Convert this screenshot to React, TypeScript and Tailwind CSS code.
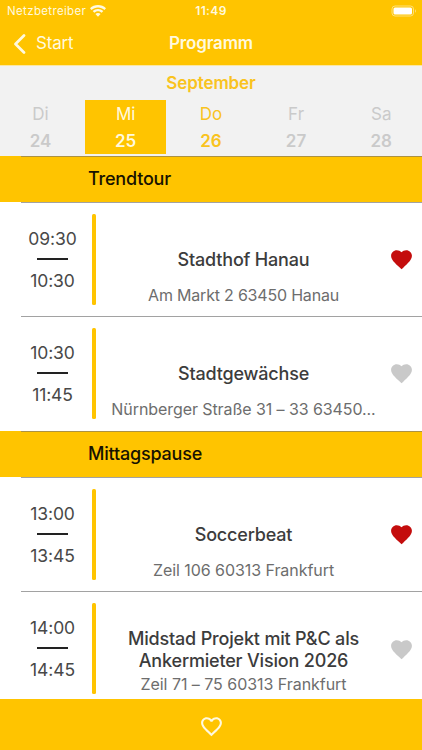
import React from "react";

type Session = {
  start: string;
  end: string;
  title: string[];
  place: string;
  placeTracking: string;
  favorite: boolean;
  height: string;
};

const HEART =
  "M12 21.35l-1.45-1.32C5.4 15.36 2 12.28 2 8.5 2 5.42 4.42 3 7.5 3c1.74 0 3.41.81 4.5 2.09C13.09 3.81 14.76 3 16.5 3 19.58 3 22 5.42 22 8.5c0 3.78-3.4 6.86-8.55 11.54L12 21.35z";
const HEART_OUTLINE =
  "M16.5 3c-1.74 0-3.41.81-4.5 2.09C10.91 3.81 9.24 3 7.5 3 4.42 3 2 5.42 2 8.5c0 3.78 3.4 6.86 8.55 11.54L12 21.35l1.45-1.32C18.6 15.36 22 12.28 22 8.5 22 5.42 19.58 3 16.5 3zm-4.4 15.55l-.1.1-.1-.1C7.14 14.24 4 11.39 4 8.5 4 6.5 5.5 5 7.5 5c1.54 0 3.04.99 3.57 2.36h1.87C13.46 5.99 14.96 5 16.5 5c2 0 3.5 1.5 3.5 3.5 0 2.89-3.14 5.74-7.9 10.05z";

const days = [
  { name: "Di", date: "24", style: "text-[#cacaca]" },
  { name: "Mi", date: "25", style: "bg-[#ffc400] text-[#fff9df]" },
  { name: "Do", date: "26", style: "text-[#f9c320]" },
  { name: "Fr", date: "27", style: "text-[#cacaca]" },
  { name: "Sa", date: "28", style: "text-[#cacaca]" },
];

const morning: Session[] = [
  { start: "09:30", end: "10:30", title: ["Stadthof Hanau"], place: "Am Markt 2 63450 Hanau", placeTracking: "tracking-[-0.2px]", favorite: true, height: "h-[114px]" },
  { start: "10:30", end: "11:45", title: ["Stadtgewächse"], place: "Nürnberger Straße 31 – 33 63450...", placeTracking: "tracking-[-0.08px]", favorite: false, height: "h-[115px]" },
];
const afternoon: Session[] = [
  { start: "13:00", end: "13:45", title: ["Soccerbeat"], place: "Zeil 106 60313 Frankfurt", placeTracking: "tracking-[-0.06px]", favorite: true, height: "h-[114px]" },
  { start: "14:00", end: "14:45", title: ["Midstad Projekt mit P&C als", "Ankermieter Vision 2026"], place: "Zeil 71 – 75 60313 Frankfurt", placeTracking: "tracking-[-0.04px]", favorite: false, height: "h-[114px]" },
];

function SectionHeader({ title }: { title: string }) {
  return (
    <div className="h-[46px] shrink-0 bg-[#ffc400]">
      <div className="ml-[21px] flex h-[46px] items-center border-t border-[#ac9243] pl-[67px] pb-[2px] text-[18px] font-medium tracking-[-0.2px] text-[#171200]">
        {title}
      </div>
    </div>
  );
}

function SessionRow({ s }: { s: Session }) {
  const twoLines = s.title.length > 1;
  return (
    <div className={`ml-[21px] flex shrink-0 border-t border-[#a2a2a2] ${s.height}`}>
      <div className="flex w-[63px] flex-col items-center pt-[25px] text-[17.5px] leading-[22px] tracking-[-0.1px] text-[#484848]">
        <span>{s.start}</span>
        <span className="mt-[8px] mb-[10px] h-[2px] w-[31px] bg-[#222]" />
        <span>{s.end}</span>
      </div>
      <div className="mt-[11px] ml-[8px] h-[91px] w-[4px] rounded-[1.5px] bg-[#ffc400]" />
      <div className="flex w-[295px] flex-col items-center whitespace-nowrap">
        <div className={`flex flex-col items-center text-[18px] leading-[22px] font-medium tracking-[-0.18px] text-[#3c3c3c] ${twoLines ? "pt-[36px]" : "pt-[46px]"}`}>
          {s.title.map((line) => (
            <span key={line}>{line}</span>
          ))}
        </div>
        <span className={`text-[16px] leading-[20px] text-[#6d6d6d] ${s.placeTracking} ${twoLines ? "mt-[2px]" : "mt-[14px]"}`}>
          {s.place}
        </span>
      </div>
      <svg viewBox="0 0 24 24" className={`-ml-[2px] h-[25px] w-[25px] shrink-0 ${twoLines ? "mt-[45px]" : "mt-[44px]"} ${s.favorite ? "fill-[#c40d0d]" : "fill-[#c9c9c9]"}`}>
        <path d={HEART} />
      </svg>
    </div>
  );
}

export default function App() {
  return (
    <div className="flex h-[750px] w-[422px] flex-col overflow-hidden bg-white font-['Inter','Liberation_Sans',sans-serif]">
      <header className="h-[65px] shrink-0 bg-[#ffc400] text-[#fff9df]">
        <div className="grid h-[22px] grid-cols-3 items-center">
          <div className="flex items-center gap-[4px] pl-[7px] text-[11.5px]">
            <span className="pt-[1px] tracking-[0.35px]">Netzbetreiber</span>
            <svg viewBox="0 0 16 12" className="h-[12px] w-[16px] fill-[#fff9df]">
              <path d="M8 0C4.9 0 2.1 1.2 0 3.2l1.6 1.7C3.3 3.3 5.5 2.4 8 2.4s4.7.9 6.4 2.5L16 3.2C13.9 1.2 11.1 0 8 0z" />
              <path d="M8 4C6 4 4.1 4.8 2.7 6.1l1.6 1.7C5.3 6.9 6.6 6.3 8 6.3s2.7.6 3.7 1.5l1.6-1.7C11.9 4.8 10 4 8 4z" />
              <path d="M8 7.9c-1 0-1.9.4-2.6 1L8 11.7l2.6-2.8c-.7-.6-1.6-1-2.6-1z" />
            </svg>
          </div>
          <span className="text-center text-[12px] font-semibold tracking-[0.4px]">11:49</span>
          <div className="flex justify-end pr-[5px]">
            <svg viewBox="0 0 26 12" className="h-[12px] w-[26px]">
              <rect x="1" y="1" width="21.5" height="10" rx="3" fill="none" stroke="#ffe078" />
              <rect x="2.5" y="2.5" width="18.5" height="7" rx="1.5" fill="white" />
              <path d="M24 4.3c1.3.6 1.3 2.9 0 3.5z" fill="#ffe078" />
            </svg>
          </div>
        </div>
        <div className="grid h-[43px] grid-cols-3 items-center text-[17px]">
          <div className="flex items-center pl-[13px]">
            <svg viewBox="0 0 13 20" className="h-[20px] w-[13px] fill-none stroke-[#fff9df] stroke-[2.7]">
              <path d="M11 1.5L2.5 10l8.5 8.5" strokeLinecap="round" strokeLinejoin="round" />
            </svg>
            <span className="ml-[10px] tracking-[-0.2px]">Start</span>
          </div>
          <span className="text-center font-semibold tracking-[-0.15px]">Programm</span>
        </div>
      </header>

      <section className="h-[91px] shrink-0 border-t border-[#fbe7a2] bg-[#f2f2f2]">
        <div className="h-[34px] pt-[5px] text-center text-[17px] leading-[24px] font-semibold tracking-[-0.1px] text-[#f9c320]">September</div>
        <div className="grid grid-cols-[81px_81px_81px_81px_81px] gap-x-[4.2px]">
          {days.map((d) => (
            <div key={d.date} className={`flex h-[54px] flex-col items-center pt-[1px] text-[17px] leading-[27px] ${d.style}`}>
              <span>{d.name}</span>
              <span className="font-semibold">{d.date}</span>
            </div>
          ))}
        </div>
      </section>

      <main className="flex h-[543px] shrink-0 flex-col overflow-hidden">
        <SectionHeader title="Trendtour" />
        {morning.map((s) => <SessionRow key={s.start} s={s} />)}
        <SectionHeader title="Mittagspause" />
        {afternoon.map((s) => <SessionRow key={s.start} s={s} />)}
      </main>

      <footer className="flex h-[51px] shrink-0 items-center justify-center bg-[#ffc400] pt-[4px]">
        <svg viewBox="0 0 24 24" className="h-[25px] w-[25px] fill-[#fff9df]">
          <path d={HEART_OUTLINE} />
        </svg>
      </footer>
    </div>
  );
}
